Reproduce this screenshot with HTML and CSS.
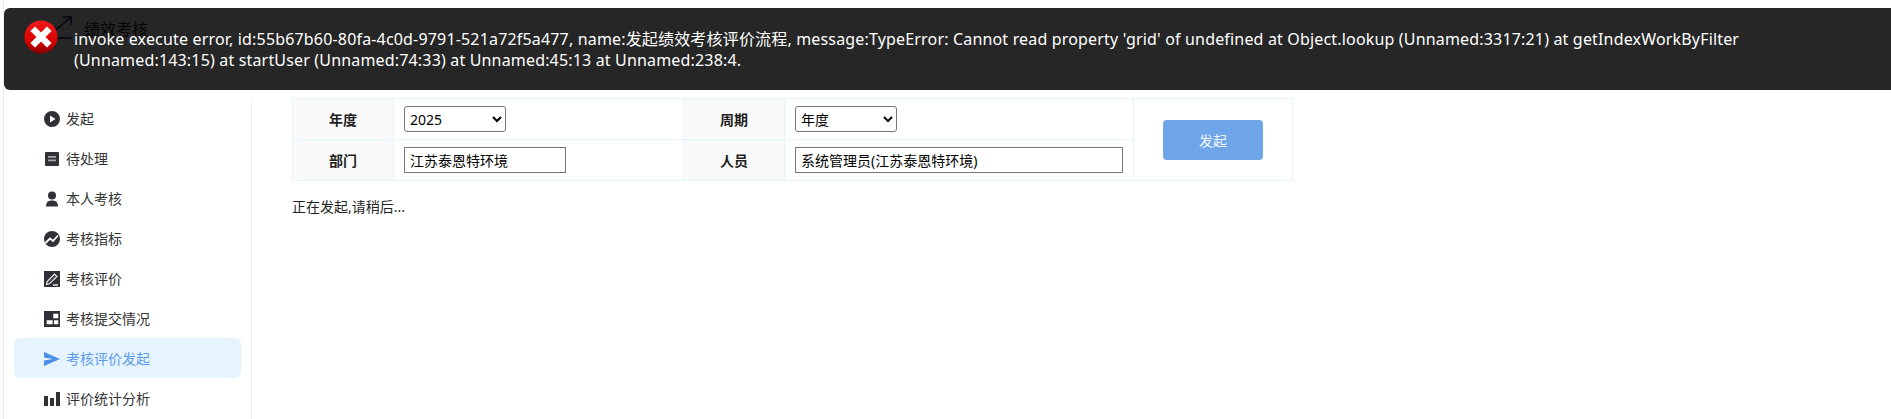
FILE: index.html
```html
<!DOCTYPE html>
<html lang="zh-CN">
<head>
    <meta charset="UTF-8">
    <meta name="viewport" content="width=device-width, initial-scale=1.0">
    <title>绩效考核</title>
    <link rel="stylesheet" href="styles.css">
</head>
<body>
    <div class="app">
        <div class="header">
            <svg class="logo" width="24" height="28" viewBox="0 0 24 28" fill="none" stroke="#0d2c66" stroke-width="1.6">
                <path d="M1 12 L7 15 L21 3"/>
                <path d="M13 3 H21 V11"/>
                <path d="M7 24 H22"/>
            </svg>
            <span class="app-title">绩效考核</span>
        </div>
        <div class="body-row">
            <ul class="nav">
                <li class="nav-item">
                    <svg class="nav-icon" viewBox="0 0 16 16"><path fill-rule="evenodd" d="M8 0a8 8 0 1 0 0 16A8 8 0 0 0 8 0zM6 4.5v7l5.5-3.5z"/></svg>
                    发起
                </li>
                <li class="nav-item">
                    <svg class="nav-icon" viewBox="0 0 16 16"><rect x="1" y="1" width="14" height="14" rx="1"/><path d="M4 5h8v1.7H4zM4 8.5h8v1.7H4z" fill="#a8a8a8"/></svg>
                    待处理
                </li>
                <li class="nav-item">
                    <svg class="nav-icon" viewBox="0 0 16 16"><circle cx="8" cy="4.5" r="4"/><path d="M2 15.5c0-4 2-6 6-6s6 2 6 6z"/></svg>
                    本人考核
                </li>
                <li class="nav-item">
                    <svg class="nav-icon" viewBox="0 0 16 16"><circle cx="8" cy="8" r="8"/><path d="M1.5 12 L6 7.5 L9 10 L14 4.5" fill="none" stroke="#fff" stroke-width="1.8"/></svg>
                    考核指标
                </li>
                <li class="nav-item">
                    <svg class="nav-icon" viewBox="0 0 16 16"><rect width="16" height="16"/><path d="M2.5 13.5 L3.2 10.5 L10.5 3 L13 5.5 L5.5 12.8z" fill="#444" stroke="#eee" stroke-width="1.1"/><path d="M9 14h5" stroke="#fff" stroke-width="1.3"/></svg>
                    考核评价
                </li>
                <li class="nav-item">
                    <svg class="nav-icon" viewBox="0 0 16 16"><path fill-rule="evenodd" d="M0 0h16v16H0zM9.3 2.7V7.3h5V2.7zM2.7 9.3v4h6v-4zM10 9.3v4h4.3v-4z"/></svg>
                    考核提交情况
                </li>
                <li class="nav-item nav-item-active">
                    <svg class="nav-icon" viewBox="0 0 16 16"><path d="M0 1 L16 8 L0 15 V9.5 L9 8 L0 6.5z"/></svg>
                    考核评价发起
                </li>
                <li class="nav-item">
                    <svg class="nav-icon" viewBox="0 0 16 16"><path d="M0 5h4v10H0zM6 7h4v8H6zM12 1h4v14h-4z"/></svg>
                    评价统计分析
                </li>
            </ul>
            <div class="content">
                <table class="filter-table">
                    <colgroup>
                        <col class="col-label">
                        <col class="col-dept">
                        <col class="col-label">
                        <col class="col-user">
                        <col class="col-action">
                    </colgroup>
                    <tr>
                        <th>年度</th>
                        <td>
                            <select class="field-select">
                                <option>2025</option>
                            </select>
                        </td>
                        <th>周期</th>
                        <td>
                            <select class="field-select">
                                <option>年度</option>
                            </select>
                        </td>
                        <td class="action-cell" rowspan="2">
                            <button type="button" class="start-btn">发起</button>
                        </td>
                    </tr>
                    <tr>
                        <th>部门</th>
                        <td><input type="text" class="field-input field-dept" value="江苏泰恩特环境"></td>
                        <th>人员</th>
                        <td><input type="text" class="field-input field-user" value="系统管理员(江苏泰恩特环境)"></td>
                    </tr>
                </table>
                <p class="status">正在发起,请稍后...</p>
            </div>
        </div>
    </div>

    <div class="toast">
        <svg class="toast-icon" width="34" height="34" viewBox="0 0 34 34">
            <defs>
                <linearGradient id="err" x1="0" y1="0" x2="0" y2="1">
                    <stop offset="0%" stop-color="#f21c1c"/>
                    <stop offset="65%" stop-color="#d60000"/>
                    <stop offset="100%" stop-color="#8a0000"/>
                </linearGradient>
            </defs>
            <circle cx="17" cy="17" r="16.5" fill="url(#err)"/>
            <path d="M11 11 L23 23 M23 11 L11 23" stroke="#fff" stroke-width="6.5" stroke-linecap="square"/>
        </svg>
        <div class="toast-text">invoke execute error, id:55b67b60-80fa-4c0d-9791-521a72f5a477, name:发起绩效考核评价流程, message:TypeError: Cannot read property 'grid' of undefined at Object.lookup (Unnamed:3317:21) at getIndexWorkByFilter (Unnamed:143:15) at startUser (Unnamed:74:33) at Unnamed:45:13 at Unnamed:238:4.</div>
    </div>
</body>
</html>
```

FILE: styles.css
```css
* {
    box-sizing: border-box;
}

body {
    margin: 0;
    height: 419px;
    overflow: hidden;
    background: #fff;
    color: #262626;
    font-family: "Noto Sans", "Noto Sans CJK SC", sans-serif;
    font-size: 14px;
}

.app {
    margin-left: 3px;
    height: 419px;
    border-left: 1px solid #ececec;
    overflow: hidden;
}

.header {
    height: 98px;
    display: flex;
    align-items: flex-start;
    padding: 14px 0 0 46px;
}

.logo {
    flex: none;
}

.app-title {
    margin-left: 10px;
    margin-top: 3px;
    font-size: 16px;
    line-height: 24px;
    color: #1f1f1f;
}

.body-row {
    display: flex;
}

.nav {
    width: 248px;
    height: 321px;
    margin: 0;
    padding: 0 10px;
    list-style: none;
    border-right: 1px solid #eeeeee;
    flex: none;
}

.nav-item {
    height: 40px;
    display: flex;
    align-items: center;
    gap: 6px;
    padding-left: 30px;
    padding-top: 1px;
    border-radius: 6px;
    color: #333;
    line-height: 22px;
}

.nav-icon {
    width: 16px;
    height: 16px;
    flex: none;
    fill: #2f3136;
}

.nav-item-active {
    background: #e6f4ff;
    color: #5c9ae8;
}

.nav-item-active .nav-icon {
    fill: #4b8ee8;
}

.content {
    padding-left: 40px;
}

.filter-table {
    width: 1000px;
    table-layout: fixed;
    border-collapse: collapse;
    border: 1px solid #e6f4ff;
}

.col-label {
    width: 101px;
}

.col-dept {
    width: 290px;
}

.col-user {
    width: 349px;
}

.col-action {
    width: 159px;
}

.filter-table th,
.filter-table td {
    height: 41px;
    padding: 0 10px;
    border: 1px solid #e6f4ff;
    font-size: 14px;
}

.filter-table th {
    background: #fafafa;
    color: #1f1f1f;
    font-weight: 700;
    text-align: center;
}

.field-select {
    display: block;
    width: 102px;
    height: 26px;
    padding: 0 1px;
    background: #fff;
    border: 1px solid #767676;
    border-radius: 3px;
    color: #000;
    font-family: inherit;
    font-size: 14px;
}

.field-input {
    display: block;
    height: 26px;
    padding: 1px 5px;
    border: 1px solid #767676;
    color: #000;
    font-family: inherit;
    font-size: 14px;
}

.field-dept {
    width: 162px;
}

.field-user {
    width: 328px;
}

.filter-table .action-cell {
    padding: 0;
    text-align: center;
}

.start-btn {
    display: block;
    width: 100px;
    height: 40px;
    margin: 0 auto;
    background: #6fa6e9;
    border: 0;
    border-radius: 4px;
    color: #f2f7fd;
    font-family: inherit;
    font-size: 14px;
}

.status {
    margin: 15px 0 0;
    line-height: 22px;
    color: #1f1f1f;
    font-size: 14px;
}

/* message sits over the page, the header shows through it */
.toast {
    position: absolute;
    left: 4px;
    top: 8px;
    width: 1900px;
    height: 82px;
    display: flex;
    padding: 21px 0 0 20px;
    background: rgba(0, 0, 0, 0.85);
    border-radius: 6px;
}

.toast-icon {
    flex: none;
    margin-top: -9px;
}

.toast-text {
    width: 1720px;
    margin-left: 16px;
    color: #fff;
    font-size: 16px;
    line-height: 21px;
    letter-spacing: 0.17px;
}
```
